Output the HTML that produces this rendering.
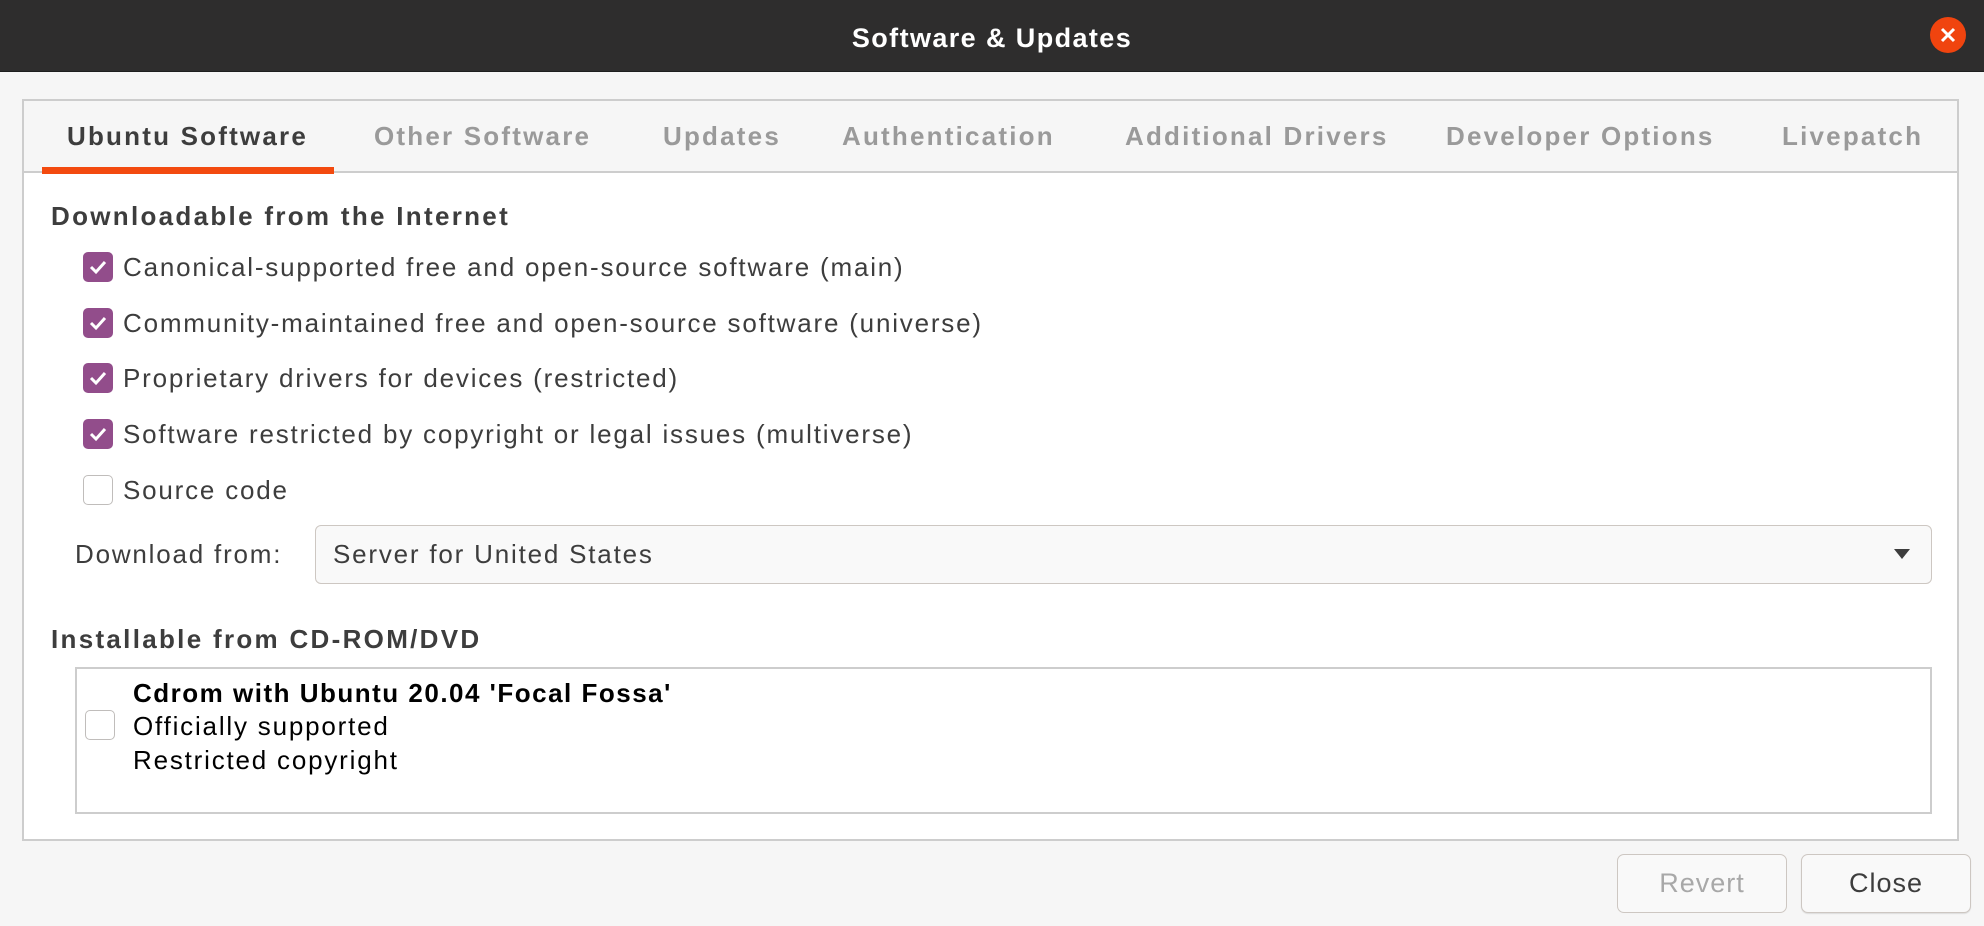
<!DOCTYPE html>
<html><head><meta charset="utf-8"><style>
*{margin:0;padding:0;box-sizing:border-box}
body{width:1984px;height:926px;background:#f6f6f6;font-family:"Liberation Sans",sans-serif;color:#3d3d3d;position:relative;overflow:hidden}
.a{position:absolute;white-space:nowrap}
.title{left:0;top:0;width:1984px;height:72px;background:#2e2d2d;border-bottom:1px solid #1e1e1e}
.tab{top:119px;font-size:26px;font-weight:bold;color:#9a9a9a;line-height:34px;letter-spacing:2.2px}
.cb{width:30px;height:30px;border-radius:5px;background:#924d8b}
.cb svg{display:block}
.cbe{width:30px;height:30px;border-radius:5px;background:#fff;border:1px solid #c0bdbb}
.lbl{font-size:26px;line-height:34px;color:#3d3d3d;letter-spacing:1.8px}
.h{font-size:26px;font-weight:bold;line-height:34px;color:#3d3d3d;letter-spacing:2.3px}
.btn{border:1px solid #cdc7c2;border-radius:7px;background:#f9f9f9;font-size:27px;text-align:center;line-height:57px;letter-spacing:1px}
</style></head><body>
<div class="a title"></div>
<div class="a" style="left:0;width:1984px;top:21px;text-align:center;color:#fff;font-weight:bold;font-size:27px;line-height:34px;letter-spacing:1.4px">Software &amp; Updates</div>
<div class="a" style="left:1930px;top:17px;width:36px;height:36px;border-radius:50%;background:#f0440f"></div>
<svg class="a" style="left:1930px;top:17px" width="36" height="36"><path d="M12 12L24 24M24 12L12 24" stroke="#fff" stroke-width="3"/></svg>

<div class="a" style="left:22px;top:99px;width:1937px;height:742px;background:#fff;border:2px solid #cdcdcd"></div>
<div class="a" style="left:24px;top:101px;width:1933px;height:72px;background:#f6f6f6;border-bottom:2px solid #cdcdcd"></div>
<div class="a" style="left:42px;top:167px;width:292px;height:7px;background:#f34a0f"></div>
<div class="a tab" style="left:67px;color:#3d3d3d">Ubuntu Software</div>
<div class="a tab" style="left:374px">Other Software</div>
<div class="a tab" style="left:663px">Updates</div>
<div class="a tab" style="left:842px">Authentication</div>
<div class="a tab" style="left:1125px">Additional Drivers</div>
<div class="a tab" style="left:1446px">Developer Options</div>
<div class="a tab" style="left:1782px">Livepatch</div>

<div class="a h" style="left:51px;top:199px">Downloadable from the Internet</div>

<div class="a cb" style="left:83px;top:252px"><svg width="30" height="30"><path d="M8 15l5 5 9-10" fill="none" stroke="#fff" stroke-width="3"/></svg></div>
<div class="a lbl" style="left:123px;top:250px">Canonical-supported free and open-source software (main)</div>
<div class="a cb" style="left:83px;top:308px"><svg width="30" height="30"><path d="M8 15l5 5 9-10" fill="none" stroke="#fff" stroke-width="3"/></svg></div>
<div class="a lbl" style="left:123px;top:306px">Community-maintained free and open-source software (universe)</div>
<div class="a cb" style="left:83px;top:363px"><svg width="30" height="30"><path d="M8 15l5 5 9-10" fill="none" stroke="#fff" stroke-width="3"/></svg></div>
<div class="a lbl" style="left:123px;top:361px">Proprietary drivers for devices (restricted)</div>
<div class="a cb" style="left:83px;top:419px"><svg width="30" height="30"><path d="M8 15l5 5 9-10" fill="none" stroke="#fff" stroke-width="3"/></svg></div>
<div class="a lbl" style="left:123px;top:417px">Software restricted by copyright or legal issues (multiverse)</div>
<div class="a cbe" style="left:83px;top:475px"></div>
<div class="a lbl" style="left:123px;top:473px">Source code</div>

<div class="a lbl" style="left:75px;top:537px">Download from:</div>
<div class="a" style="left:315px;top:525px;width:1617px;height:59px;border:1px solid #cdc7c2;border-radius:6px;background:#f9f9f9"></div>
<div class="a lbl" style="left:333px;top:537px">Server for United States</div>
<svg class="a" style="left:1893px;top:548px" width="18" height="12"><path d="M1 1h16l-8 10z" fill="#3d3d3d"/></svg>

<div class="a h" style="left:51px;top:622px">Installable from CD-ROM/DVD</div>
<div class="a" style="left:75px;top:667px;width:1857px;height:147px;border:2px solid #cdcdcd;background:#fff"></div>
<div class="a cbe" style="left:85px;top:710px"></div>
<div class="a h" style="left:133px;top:676px;color:#000;letter-spacing:1.5px">Cdrom with Ubuntu 20.04 'Focal Fossa'</div>
<div class="a lbl" style="left:133px;top:709px;color:#000">Officially supported</div>
<div class="a lbl" style="left:133px;top:743px;color:#000">Restricted copyright</div>

<div class="a btn" style="left:1617px;top:854px;width:170px;height:59px;color:#a8a8a8">Revert</div>
<div class="a btn" style="left:1801px;top:854px;width:170px;height:59px;color:#3d3d3d;box-shadow:0 1px 1px rgba(0,0,0,.1)">Close</div>
</body></html>
